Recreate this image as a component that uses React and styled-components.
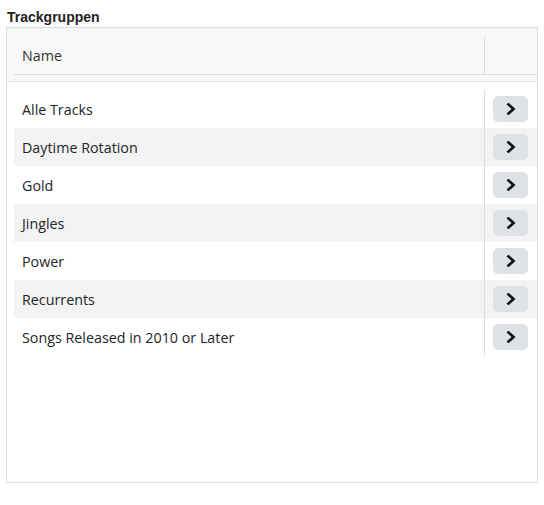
import React from 'react';
import styled, { createGlobalStyle } from 'styled-components';

const GlobalStyle = createGlobalStyle`
    html, body {
        margin: 0;
        padding: 0;
        background: #fff;
    }
`;

const Page = styled.div`
    padding: 8px 0 0 6px;
    width: 532px;
    font-family: 'Open Sans', 'Noto Sans', sans-serif;
    color: #212529;
`;

const Title = styled.h2`
    margin: 0 0 1px 1px;
    height: 18px;
    line-height: 18px;
    font-family: 'Liberation Sans', Arial, sans-serif;
    font-size: 14px;
    font-weight: bold;
    color: #222;
`;

const Panel = styled.div`
    border: 1px solid #dcdcdc;
    height: 454px;
    background: #fff;
    display: flex;
    flex-direction: column;
`;

const HeaderWrap = styled.div`
    background: #f7f8f9;
    padding: 0 0 6px 7px;
    border-bottom: 1px solid #e2e3e5;
`;

const Grid = styled.div`
    display: grid;
    grid-template-columns: 1fr 53px;
`;

const HeaderRow = styled(Grid)`
    height: 46px;
    border-bottom: 1px solid #dcdde0;
`;

const HeadCell = styled.div`
    display: flex;
    align-items: center;
    padding: 8px 0 0 8px;
    font-size: 14.3px;
    color: #333;
`;

const HeadSpacer = styled.div`
    margin-top: 8px;
    border-left: 1px solid #dcdde0;
`;

const Body = styled.div`
    padding: 8px 0 0 7px;
`;

const Row = styled(Grid)`
    height: 38px;
    background: ${p => (p.$striped ? '#f3f3f3' : '#fff')};
`;

const NameCell = styled.div`
    display: flex;
    align-items: center;
    padding-left: 8px;
    font-size: 14.3px;
    color: #212529;
`;

const ActionCell = styled.div`
    display: flex;
    align-items: center;
    padding-left: 8px;
    border-left: 1px solid #dcdde0;
`;

const OpenButton = styled.button`
    width: 35px;
    height: 26px;
    border: none;
    border-radius: 5px;
    background: #dee1e6;
    display: flex;
    align-items: center;
    justify-content: center;
    padding: 0;
    cursor: pointer;
`;

const groups = [
    'Alle Tracks',
    'Daytime Rotation',
    'Gold',
    'Jingles',
    'Power',
    'Recurrents',
    'Songs Released in 2010 or Later'
];

const Chevron = () => (
    <svg width="12" height="12" viewBox="0 0 12 12">
        <polyline points="3.5,1.5 8.5,6 3.5,10.5" fill="none" stroke="#111" strokeWidth="2.7" strokeLinecap="square" strokeLinejoin="miter" />
    </svg>
);

export default function App() {
    return (
        <Page>
            <GlobalStyle />
            <Title>Trackgruppen</Title>
            <Panel>
                <HeaderWrap>
                    <HeaderRow>
                        <HeadCell>Name</HeadCell>
                        <HeadSpacer />
                    </HeaderRow>
                </HeaderWrap>
                <Body>
                    {groups.map((name, idx) => (
                        <Row key={name} $striped={idx % 2 === 1}>
                            <NameCell>{name}</NameCell>
                            <ActionCell>
                                <OpenButton aria-label={`${name} öffnen`}>
                                    <Chevron />
                                </OpenButton>
                            </ActionCell>
                        </Row>
                    ))}
                </Body>
            </Panel>
        </Page>
    );
}
